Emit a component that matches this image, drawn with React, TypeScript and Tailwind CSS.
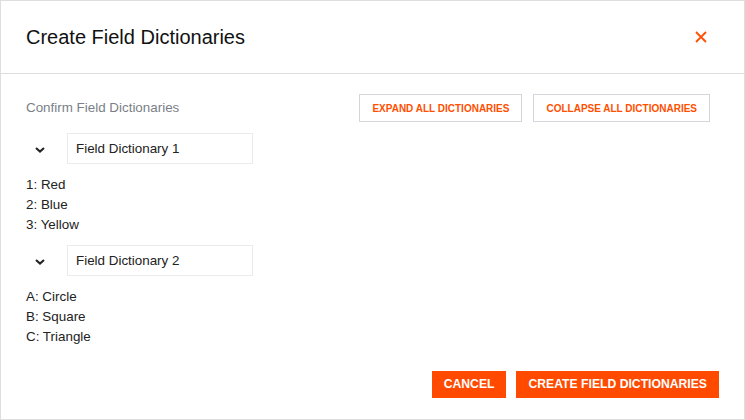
import React from 'react';

interface Dictionary {
  name: string;
  entries: string[];
}

const dictionaries: Dictionary[] = [
  { name: 'Field Dictionary 1', entries: ['1: Red', '2: Blue', '3: Yellow'] },
  { name: 'Field Dictionary 2', entries: ['A: Circle', 'B: Square', 'C: Triangle'] },
];

const Chevron = () => (
  <svg width="10" height="6" viewBox="0 0 10 6" fill="none">
    <path d="M1 1l4 3.6L9 1" stroke="#222" strokeWidth="2" />
  </svg>
);

const CloseIcon = () => (
  <svg width="12" height="12" viewBox="0 0 12 12" fill="none">
    <path d="M1 1l10 10M11 1L1 11" stroke="#ff4f00" strokeWidth="1.8" />
  </svg>
);

const DictionaryGroup: React.FC<{ dict: Dictionary }> = ({ dict }) => (
  <div>
    <div className="flex items-center h-[31px]">
      <button className="w-[41px] h-full flex items-center pl-[9px] pt-[2px]">
        <Chevron />
      </button>
      <div className="w-[186px] h-[31px] border border-[#ebebeb] flex items-center pl-[8px] pt-[2px] text-[13.4px] text-[#222]">
        {dict.name}
      </div>
    </div>
    <ul className="mt-[11px] text-[13.4px] leading-[20px] text-[#222]">
      {dict.entries.map(e => (
        <li key={e}>{e}</li>
      ))}
    </ul>
  </div>
);

export default function App() {
  return (
    <div
      className="w-[745px] h-[420px] bg-white border border-[#dedede] flex flex-col"
      style={{ fontFamily: '"Liberation Sans", Arial, sans-serif' }}
    >
      <div className="h-[73px] shrink-0 border-b border-[#dedede] flex items-center justify-between pl-[25px] pr-[37px]">
        <h1 className="text-[20px] text-[#111] pb-[1px]">Create Field Dictionaries</h1>
        <button className="p-0">
          <CloseIcon />
        </button>
      </div>

      <div className="flex-1 flex flex-col px-[25px]">
        <div className="flex items-center justify-between mt-[20px] pr-[9px]">
          <span className="text-[13.4px] text-[#7a7f87]">Confirm Field Dictionaries</span>
          <div className="flex gap-[11px]">
            <button className="h-[28px] px-[12px] border border-[#d3d6da] text-[10px] font-bold text-[#ff4f00]">
              EXPAND ALL DICTIONARIES
            </button>
            <button className="h-[28px] px-[12px] border border-[#d3d6da] text-[10px] font-bold text-[#ff4f00]">
              COLLAPSE ALL DICTIONARIES
            </button>
          </div>
        </div>

        <div className="flex flex-col gap-[10px] mt-[11px]">
          {dictionaries.map(d => (
            <DictionaryGroup key={d.name} dict={d} />
          ))}
        </div>

        <div className="flex justify-end gap-[10px] mt-auto mb-[21px]">
          <button className="h-[27px] px-[12px] bg-[#ff4a00] text-white text-[12.2px] font-bold">
            CANCEL
          </button>
          <button className="h-[27px] px-[12px] bg-[#ff4a00] text-white text-[12.2px] font-bold">
            CREATE FIELD DICTIONARIES
          </button>
        </div>
      </div>
    </div>
  );
}
